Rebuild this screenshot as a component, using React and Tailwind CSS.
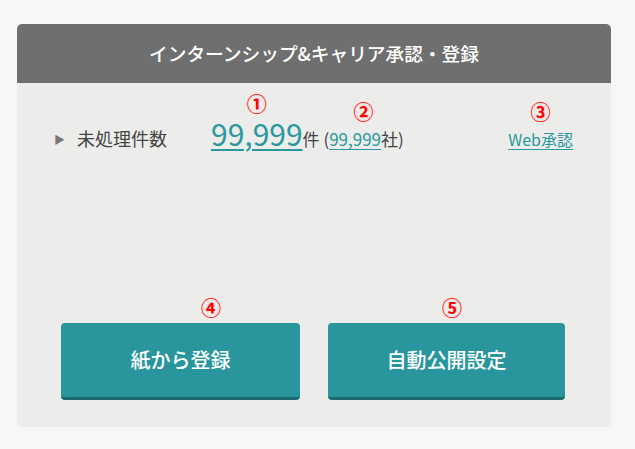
const font = { fontFamily: '"Noto Sans CJK JP", "Noto Sans", sans-serif' };

function Mark({ children, className = '' }) {
  return (
    <span
      className={`absolute left-1/2 -translate-x-1/2 text-[20px] leading-none font-bold text-[#ff0000] [text-shadow:0_0_2px_#ffd0d0] ${className}`}
    >
      {children}
    </span>
  );
}

export default function App() {
  return (
    <div className="min-h-screen w-full bg-[#f7f7f7] pt-[24px] pl-[17px]" style={font}>
      <div className="w-[594px] rounded-[5px] overflow-hidden">
        <div className="h-[59px] bg-[#6f6f6f] flex items-center justify-center text-white text-[18.7px] font-medium">
          インターンシップ&amp;キャリア承認・登録
        </div>

        <div className="h-[344px] bg-[#ecedea] flex flex-col">
          <div className="flex items-baseline pt-[35px] pl-[37px] pr-[38px] text-[#444]">
            <div className="w-[157px] flex items-baseline gap-[12px]">
              <span className="text-[#777] text-[11px] leading-none relative -top-[2px]">▶</span>
              <span className="text-[18px]">未処理件数</span>
            </div>

            <span className="relative">
              <Mark className="-top-[24px]">①</Mark>
              <span className="text-[30px] leading-none font-normal text-[#2a989f] underline decoration-2 underline-offset-[3px]">
                99,999
              </span>
            </span>
            <span className="text-[17px]">件 (</span>
            <span className="relative text-[17px]">
              <Mark className="-top-[24px]">②</Mark>
              <span className="text-[#2a989f] underline underline-offset-[3px]">99,999</span>社
            </span>
            <span className="text-[17px]">)</span>

            <span className="relative ml-auto text-[16px]">
              <Mark className="-top-[25px]">③</Mark>
              <span className="text-[#2a989f] underline underline-offset-[3px]">Web承認</span>
            </span>
          </div>

          <div className="mt-auto pb-[27px] pl-[44px] flex gap-[28px]">
            <button className="relative w-[239px] h-[77px] rounded-[4px] bg-[#29969e] border-b-[3px] border-[#1b6a6f] text-white text-[20px] font-medium">
              <span className="absolute left-[140px] -top-[25px] text-[20px] leading-none font-bold text-[#ff0000] [text-shadow:0_0_2px_#ffd0d0]">④</span>
              紙から登録
            </button>
            <button className="relative w-[237px] h-[77px] rounded-[4px] bg-[#29969e] border-b-[3px] border-[#1b6a6f] text-white text-[20px] font-medium">
              <span className="absolute left-[114px] -top-[25px] text-[20px] leading-none font-bold text-[#ff0000] [text-shadow:0_0_2px_#ffd0d0]">⑤</span>
              自動公開設定
            </button>
          </div>
        </div>
      </div>
    </div>
  );
}
